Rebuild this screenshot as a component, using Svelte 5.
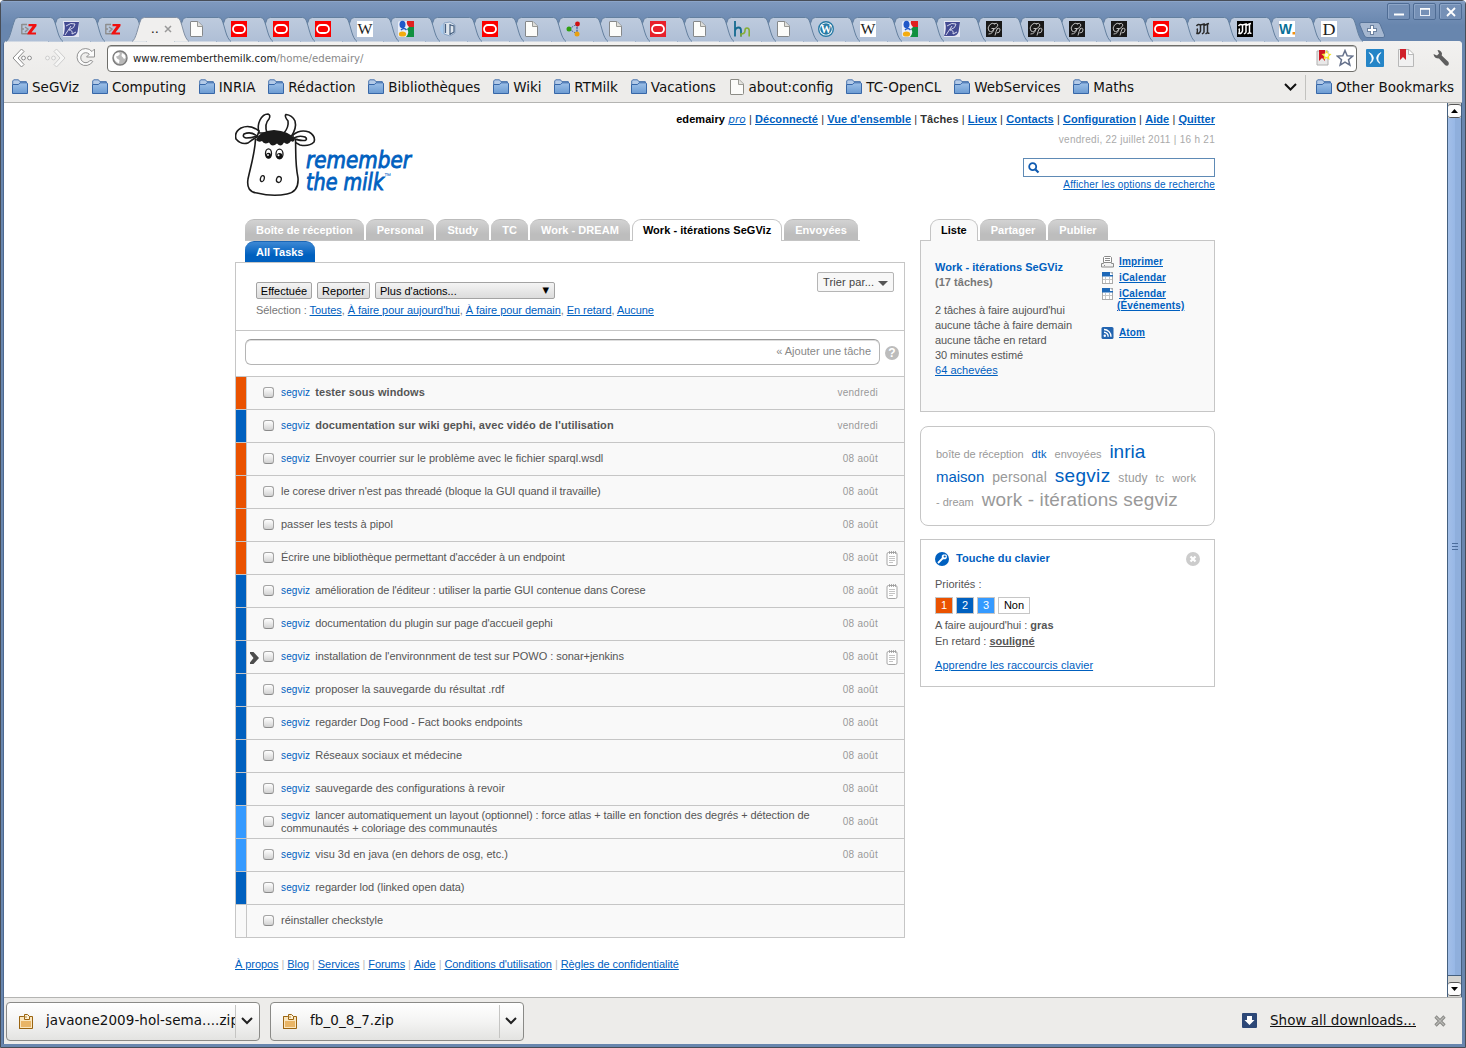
<script>
  const tabs = [
    'ez', 'inr', 'ez', 'active', 'page', 'ora', 'ora', 'ora', 'wiki', 'goo', 'cube', 'ora', 'page', 'graph', 'page', 'ora2',
    'page', 'hm', 'page', 'wp', 'wiki', 'goo', 'inr', 'gp', 'gp', 'gp', 'gp', 'ora', 'lemonde', 'mdark', 'wdot', 'dd'
  ];
  const bookmarks = ['SeGViz', 'Computing', 'INRIA', 'Rédaction', 'Bibliothèques', 'Wiki', 'RTMilk', 'Vacations', 'about:config', 'TC-OpenCL', 'WebServices', 'Maths'];
  const navLinks = ['Déconnecté', "Vue d'ensemble", 'Tâches', 'Lieux', 'Contacts', 'Configuration', 'Aide', 'Quitter'];
  const lists = ['Boîte de réception', 'Personal', 'Study', 'TC', 'Work - DREAM', 'Work - itérations SeGViz', 'Envoyées'];
  const tasks = [
    { p: 1, tag: true, name: 'tester sous windows', due: 'vendredi', bold: true },
    { p: 2, tag: true, name: "documentation sur wiki gephi, avec vidéo de l'utilisation", due: 'vendredi', bold: true },
    { p: 1, tag: true, name: 'Envoyer courrier sur le problème avec le fichier sparql.wsdl', due: '08 août' },
    { p: 1, name: "le corese driver n'est pas threadé (bloque la GUI quand il travaille)", due: '08 août', snug: true },
    { p: 1, name: 'passer les tests à pipol', due: '08 août' },
    { p: 1, name: "Écrire une bibliothèque permettant d'accéder à un endpoint", due: '08 août', note: true, tight: true },
    { p: 2, tag: true, name: "amélioration de l'éditeur : utiliser la partie GUI contenue dans Corese", due: '08 août', note: true, tight: true },
    { p: 2, tag: true, name: "documentation du plugin sur page d'accueil gephi", due: '08 août', tight: true },
    { p: 2, tag: true, name: "installation de l'environnment de test sur POWO : sonar+jenkins", due: '08 août', note: true, cursor: true, snug: true },
    { p: 2, tag: true, name: 'proposer la sauvegarde du résultat .rdf', due: '08 août' },
    { p: 2, tag: true, name: 'regarder Dog Food - Fact books endpoints', due: '08 août' },
    { p: 2, tag: true, name: 'Réseaux sociaux et médecine', due: '08 août' },
    { p: 2, tag: true, name: 'sauvegarde des configurations à revoir', due: '08 août' },
    { p: 3, tag: true, name: 'lancer automatiquement un layout (optionnel) : force atlas + taille en fonction des degrés + détection de communautés + coloriage des communautés', due: '08 août', tight: true, wrap: true },
    { p: 3, tag: true, name: 'visu 3d en java (en dehors de osg, etc.)', due: '08 août' },
    { p: 2, tag: true, name: 'regarder lod (linked open data)', due: '', snug: true },
    { p: 0, name: 'réinstaller checkstyle', due: '' }
  ];
  const footer = ['À propos', 'Blog', 'Services', 'Forums', 'Aide', "Conditions d'utilisation", 'Règles de confidentialité'];
</script>

{#snippet folder()}
  <svg class="ico" width="16" height="16" viewBox="0 0 16 16">
    <path d="M.7 13.500V2L1.700 .8H6.500L7.800 2.600H14.300V5" fill="#b4cbe8" stroke="#4a74ad" />
    <path d="M.5 14.500V6Q.5 5.500 1 5.500H6.500L8 3.800H15L15.500 4.300V14.500Z" fill="url(#fold)" stroke="#3767a8" />
  </svg>
{/snippet}

{#snippet sheet()}
  <svg class="ico" width="16" height="16" viewBox="0 0 16 16">
    <path d="M2 .5H10L14.500 5V14.500Q14.500 15.500 13.500 15.500H2Q1.500 15.500 1.500 15V1Q1.500 .5 2 .5Z" fill="#fbfbf9" stroke="#8c8c86" />
    <path d="M9.500 .5V5.500H14.500" fill="#e4e4e0" stroke="#9c9c96" />
  </svg>
{/snippet}

{#snippet zip()}
  <svg width="16" height="17" viewBox="0 0 16 17">
    <path d="M1.500 3.500H5.500V15.500H1.500ZM5.500 3.500H14.500V15.500H1.500V3.500" fill="#f8dca4" stroke="#9a6410" />
    <path d="M2 4H14V15H2Z" fill="#fae6be" /><path d="M3 8H13V14H3Z" fill="#e9b566" />
    <path d="M6.500 6.500V1.500H9.500L11.500 3.500V6.500Z" fill="#fdf0d4" stroke="#9a6410" /><path d="M6.500 4L9 4" stroke="#b98a3c" />
  </svg>
{/snippet}

{#snippet favicon(kind)}
  <svg class="fav" width="16" height="16" viewBox="0 0 16 16">
    {#if kind === 'ez'}
      <path d="M.8 3V13.200M.8 3.500H6M.8 8H3M.8 12.700H7M4 6L7 8L4 11" fill="none" stroke="#8d8d8d" stroke-width="1.400" /><path d="M7.500 3H15.500V5L10.500 11.500H15V13.500H6.500V12L11.500 5.200H7.500Z" fill="#f01010" />
    {:else if kind === 'inr'}
      <rect width="16" height="16" fill="#e4e6f2" /><path d="M1 1H16L14.500 11Q13 15 9 15H0Q3 8 1 1Z" fill="#434a92" />
      <path d="M2 14L8 5M3 5Q8 1 12 3Q12 7 6 9Q10 9 9 13L13 11" fill="none" stroke="#d5d7ec" />
    {:else if kind === 'page'}
      <path d="M2 .5H9L13.500 5V14.500Q13.500 15.500 12.500 15.500H2Q1.500 15.500 1.500 15V1Q1.500 .5 2 .5Z" fill="#fcfcfa" stroke="#85888a" /><path d="M8.500 .5V5.500H13.500" fill="#dededa" stroke="#9a9a96" />
    {:else if kind === 'ora' || kind === 'ora2'}
      <rect width="16" height="16" fill={kind === 'ora' ? '#fb0000' : '#e8202a'} /><rect x="2" y="4" width="12" height="8" rx="4" fill="none" stroke="#fff" stroke-width="1.800" />
    {:else if kind === 'wiki'}
      <rect width="16" height="16" fill="#fff" /><text x=".5" y="13" class="serif" font-size="15" fill="#222" textLength="15" lengthAdjust="spacingAndGlyphs">W</text>
    {:else if kind === 'goo'}
      <rect width="16" height="16" rx="2" fill="#e9eef8" /><path d="M9 0H16V6H11Q8 3 9 0Z" fill="#e02020" /><path d="M11 6H16V16H8Q12 11 9 8Z" fill="#109040" />
      <ellipse cx="4.500" cy="3.500" rx="3" ry="3.800" fill="#2058c8" /><path d="M3 9Q6 6 8.500 9" stroke="#2058c8" stroke-width="1.500" fill="none" /><ellipse cx="4.500" cy="13" rx="3.700" ry="2.600" fill="#f4ac10" />
    {:else if kind === 'cube'}
      <circle cx="6" cy="8" r="6" fill="#a9c9ea" /><path d="M4 2L10 1L15 4V12L10 15L4 13Z" fill="#dfe6ee" stroke="#8ba4c4" /><path d="M10 3V14M5.500 3V12M10.500 4L14 5V11L10.500 13" stroke="#455f80" stroke-width="1.200" fill="none" />
    {:else if kind === 'graph'}
      <path d="M3 8L11 3L11 13ZM11 3V13" fill="none" stroke="#4c68a0" stroke-dasharray="2 1" /><circle cx="3" cy="8" r="2.500" fill="#30a010" /><circle cx="11.500" cy="3" r="2.400" fill="#d01010" /><circle cx="11" cy="13" r="2.500" fill="#e8a010" />
    {:else if kind === 'hm'}
      <path d="M1 0V15.500M1 9.500Q2 6.500 4.500 6.500T7 9.500V15.500" fill="none" stroke="#146a90" stroke-width="1.800" /><path d="M7 15.500V13Q11 13 11 9.500Q11 7 13 7T15.200 9.500V15.500" fill="none" stroke="#86ae36" stroke-width="1.600" />
    {:else if kind === 'wp'}
      <circle cx="8" cy="8" r="7.300" fill="#fff" stroke="#267aa5" stroke-width="1.400" /><circle cx="8" cy="8" r="5.800" fill="#267aa5" /><text x="2.500" y="12.300" class="serif" font-size="12" font-weight="bold" fill="#fff" textLength="11" lengthAdjust="spacingAndGlyphs">W</text>
    {:else if kind === 'gp'}
      <rect width="16" height="16" fill="#181818" /><path d="M9 3Q6 1 3.500 4T3 10Q6 12 8 7.500H5.500M8 7.500Q7 13 2.500 13M9 14.500Q10 10 11.500 7M11 8Q14 6 14 9T10.500 12M8 3Q11 1 12 4Q11 7 8 8" fill="none" stroke="#bdbdbd" />
    {:else if kind === 'lemonde' || kind === 'mdark'}
      {#if kind === 'mdark'}<rect width="16" height="16" fill="#000" />{/if}
      <path d="M1.500 5Q3 2.500 5.500 4V10Q4.500 13 2 12.500Q3 9 2 7.500M5.500 4L9 3V11.500M9 4.500L12.500 3V11Q13 13 14.500 12M7 13L9 11.500M10.500 13L12.500 11.500M12.500 3L14 2.500" fill="none" stroke={kind === 'mdark' ? '#fff' : '#282828'} stroke-width="1.500" />
    {:else if kind === 'wdot'}
      <rect width="16" height="16" fill="#fff" /><text x="0" y="13" class="sans" font-size="14" font-weight="bold" fill="#087098" textLength="13" lengthAdjust="spacingAndGlyphs">W</text><rect x="13.500" y="11" width="2.500" height="2.500" fill="#f09010" />
    {:else if kind === 'dd'}
      <rect width="16" height="16" fill="#fff" /><text x="1.500" y="13.500" class="serif" font-size="16" fill="#222" textLength="13" lengthAdjust="spacingAndGlyphs">D</text>
    {/if}
  </svg>
{/snippet}

<svg class="defs" width="0" height="0">
  <defs>
    <linearGradient id="fold" x1="0" y1="0" x2="0" y2="1"><stop offset="0" stop-color="#9dc0e8" /><stop offset="1" stop-color="#6c9bd2" /></linearGradient>
    <linearGradient id="tabg" x1="0" y1="0" x2="0" y2="1"><stop offset="0" stop-color="#becbde" /><stop offset="1" stop-color="#afbfd6" /></linearGradient>
  </defs>
</svg>

<div class="window">
  <header class="title">
    <div class="tabs">
      {#each tabs as kind, i}
        <div class="tab" style:z-index={kind === 'active' ? 60 : 40 - i}>
          <svg class="shape" width="60" height="25" viewBox="0 0 60 25">
            <path d="M0 24.500C4 23 6 9 9 2.500Q10.200 .5 12.500 .5H44.500Q47 .5 48 3C51 10 52 21 57 24.500Z" fill={kind === 'active' ? '#f0efee' : 'url(#tabg)'} />
            <path d="M0 24.500C4 23 6 9 9 2.500Q10.200 .5 12.500 .5H44.500Q47 .5 48 3C51 10 52 21 57 24.500" fill="none" stroke={kind === 'active' ? '#8290a4' : '#64809f'} />
          </svg>
          {#if kind === 'active'}
            <span class="dots">..</span>
            <svg class="x" width="8" height="8" viewBox="0 0 8 8"><path d="M1 1L7 7M7 1L1 7" stroke="#999" stroke-width="1.500" /></svg>
          {:else}
            {@render favicon(kind)}
          {/if}
        </div>
      {/each}
      <svg class="plus" width="27" height="17" viewBox="0 0 27 17"><path d="M2 .5H18Q20 .5 21 2L25.500 13Q26 15.500 24 15.500H8Q6 15.500 5 13L.8 3Q.3 .5 2 .5Z" fill="#a5b7d0" stroke="#57749a" /><path d="M13 3V13M8 8H18" stroke="#6c82a0" stroke-width="4" /><path d="M13 4V12M9 8H17" stroke="#fff" stroke-width="2" /></svg>
    </div>
    <div class="winbtns">
      <span><svg width="22" height="16" viewBox="0 0 22 16"><path d="M6 10.500H16" stroke="#fff" stroke-width="2" /></svg></span>
      <span><svg width="22" height="16" viewBox="0 0 22 16"><rect x="6.500" y="4.500" width="9" height="7" fill="none" stroke="#e8eef6" /><path d="M6 5H16" stroke="#fff" stroke-width="1.500" /></svg></span>
      <span><svg width="22" height="16" viewBox="0 0 22 16"><path d="M7 4L15 12M15 4L7 12" stroke="#fff" stroke-width="1.800" /></svg></span>
    </div>
  </header>

  <div class="frame">
    <div class="toolbar">
      <svg width="24" height="22" viewBox="0 0 24 22"><path d="M10.500 2L2 11L10.500 20L13 17.500L7 11L13 4.500Z" fill="#fff" stroke="#8c8c8c" /><circle cx="12.500" cy="11" r="1.900" fill="#fff" stroke="#8c8c8c" /><circle cx="18.500" cy="11" r="1.900" fill="#fff" stroke="#8c8c8c" /></svg>
      <svg class="fwd" width="24" height="22" viewBox="0 0 24 22"><path d="M13.500 2L22 11L13.500 20L11 17.500L17 11L11 4.500Z" fill="#f6f6f5" stroke="#cdcdcd" /><circle cx="10.500" cy="11" r="1.900" fill="#f6f6f5" stroke="#cdcdcd" /><circle cx="4.500" cy="11" r="1.900" fill="#f6f6f5" stroke="#cdcdcd" /></svg>
      <svg class="reload" width="22" height="22" viewBox="0 0 22 22"><path d="M17.800 14.500A8.500 8.500 0 1 1 17 4.500L19.500 2V10H11.500L14.300 7.200A5 5 0 1 0 14.500 14Q16 12.500 17.800 14.500Z" fill="#fbfbfb" stroke="#929292" /></svg>
      <div class="url">
        <svg width="16" height="16" viewBox="0 0 16 16"><circle cx="8" cy="8" r="7" fill="#b9b9b9" stroke="#7c7c7c" stroke-width="1.400" /><path d="M3 4Q5 2 7 2.500L8 4L6 6L4 6.500L5 8.500L7.500 10L7 13.500Q2 11 2 7ZM10 3L13 5L13.500 8L12 9L11 7.500L9.500 6Z" fill="#fff" /></svg>
        <span class="addr">www.rememberthemilk.com<i>/home/edemairy/</i></span>
        <svg class="bmstar" width="16" height="16" viewBox="0 0 16 16"><path d="M1 1H12V15H1Z" fill="#e8e8e8" stroke="#b0b0b0" /><path d="M3 0H9V11L6 8L3 11Z" fill="#cf1722" /><path d="M10.500 0L12 3.500L15.500 4L13 6.500L13.500 10L10.500 8L7.500 10L8 6.500L5.500 4L9 3.500Z" fill="#f3e52c" /><circle cx="10.500" cy="5" r="2" fill="#fffbe0" /></svg>
        <svg width="18" height="18" viewBox="0 0 18 18"><path d="M9 1.500L11.200 6.700L16.700 7.100L12.500 10.700L13.900 16.200L9 13.200L4.100 16.200L5.500 10.700L1.300 7.100L6.800 6.700Z" fill="#fff" stroke="#66728c" stroke-width="1.500" /></svg>
      </div>
      <svg class="bfly" width="18" height="18" viewBox="0 0 18 18"><rect width="18" height="18" rx="1" fill="#2585c7" /><path d="M3 3.500Q7 5 7.500 9Q7 13 4 14.500Q6.500 11 6 9Q5.500 6 3 3.500ZM15 3.500Q11 5 10.500 9Q11 13 14 14.500Q11.500 11 12 9Q12.500 6 15 3.500Z" fill="#fff" stroke="#fff" stroke-width=".6" /></svg>
      <svg class="redbm" width="16" height="18" viewBox="0 0 16 18"><path d="M.5 .5H11L15.500 5V17.500H.5Z" fill="#f1f1f1" stroke="#b8b8b8" /><path d="M10.500 1V5.500H15" fill="#fff" stroke="#bbb" /><path d="M2 0H8V11L5 8L2 11Z" fill="#d0202a" /></svg>
      <svg class="wrench" width="18" height="18" viewBox="0 0 18 18"><path d="M1.500 5L5 6.500L7 4.500L5.500 1Q9 1 10 4.500L9.700 6.500L16.500 13Q17.500 15 16 16.500Q14 17 13 16L7 9.500Q2 9.500 1.500 5Z" fill="#5e5e5e" /></svg>
    </div>
    <nav class="bookmarks">
      {#each bookmarks as b}
        <span class="bm">{#if b === 'about:config'}{@render sheet()}{:else}{@render folder()}{/if}{b}</span>
      {/each}
      <svg class="chev" width="13" height="8" viewBox="0 0 13 8"><path d="M1 1L6.500 6.500L12 1" fill="none" stroke="#111" stroke-width="2" /></svg>
      <span class="bm other">{@render folder()}Other Bookmarks</span>
    </nav>

    <div class="viewport">
      <div class="page">
        <div class="head">
          <svg class="logo" width="180" height="86" viewBox="0 0 180 86">
            <g fill="#fff" stroke="#1b1b1b" stroke-width="1.600">
              <path d="M24 20Q22 13 25 7Q28 1 33 1Q36 2 34 6Q29 11 32 20ZM49 20Q54 14 53 8Q49 3 51 1.500Q57 2 60 8Q62 15 56 24Z" />
              <path d="M24 18Q15 11 6 15Q-1 19 1 26Q6 32 13 30Q18 26 22 24ZM58 22Q65 16 74 19Q81 23 79 29Q74 34 65 32Q60 30 58 27Z" />
              <path d="M22 23Q16 18 9 21Q7 24 11 25Q17 25 22 23ZM59 25Q64 22 70 24Q73 26 70 27.500Q63 28 59 25Z" />
              <path d="M20.500 26C20 40 15 56 13 66Q11 79 22 80Q38 84 52 81Q64 79 63 65C60 50 61 40 60.500 26" />
            </g>
            <path d="M21 27Q24 18 39 17Q54 18 60 26Q59 30 56 28Q53 33 49 29.500Q46 35 42 30.500Q37 35 34 29.500Q29 32 27 28Q24 30 21 27Z" fill="#1b1b1b" />
            <g fill="#fff" stroke="#1b1b1b" stroke-width="1.300"><ellipse cx="33.500" cy="40.500" rx="3" ry="4.700" /><ellipse cx="44.500" cy="41" rx="3.500" ry="4.900" /><ellipse cx="27.500" cy="65.500" rx="1.900" ry="3" transform="rotate(15 27 65)" /><ellipse cx="44" cy="66.500" rx="2.400" ry="3" transform="rotate(15 44 66)" /></g>
            <ellipse cx="33.500" cy="42.500" rx="2.500" ry="2.800" fill="#111" /><ellipse cx="44.500" cy="43" rx="2.900" ry="3" fill="#111" /><circle cx="33" cy="42" r=".9" fill="#fff" /><circle cx="43.500" cy="42.300" r="1" fill="#fff" />
            <text class="brand" x="71" y="54.500" textLength="105" lengthAdjust="spacingAndGlyphs">remember</text>
            <text class="brand" x="71" y="76.500" textLength="78" lengthAdjust="spacingAndGlyphs">the milk</text>
            <text class="tm" x="149" y="65">™</text>
          </svg>
          <div class="account">
            <div class="links"><b class="user">edemairy</b> <a class="pro" href="#pro">pro</a>{#each navLinks as l}{' | '}{#if l === 'Tâches'}<b>{l}</b>{:else}<a href="#nav">{l}</a>{/if}{/each}</div>
            <div class="date">vendredi, 22 juillet 2011 | 16 h 21</div>
            <div class="search"><svg width="12" height="12" viewBox="0 0 12 12"><circle cx="4.700" cy="4.700" r="3.500" fill="none" stroke="#0f5ab0" stroke-width="1.800" /><path d="M7.500 7.500L10.500 10.500" stroke="#0f5ab0" stroke-width="2.200" /></svg></div>
            <a class="opts" href="#opts">Afficher les options de recherche</a>
          </div>
        </div>

        <div class="cols">
          <main>
            <div class="ltabs first">{#each lists as l}<span class:on={l.includes('SeGViz')}>{l}</span>{/each}</div>
            <div class="ltabs second"><span class="blue">All Tasks</span></div>
            <section class="box">
              <div class="actions">
                <div class="left">
                  <div class="btns"><button class="b1">Effectuée</button><button class="b2">Reporter</button><button class="sel">Plus d'actions...<i>▼</i></button></div>
                  <div class="selection">Sélection : <a href="#s">Toutes</a>, <a href="#s">À faire pour aujourd'hui</a>, <a href="#s">À faire pour demain</a>, <a href="#s">En retard</a>, <a href="#s">Aucune</a></div>
                </div>
                <button class="sort">Trier par...<svg width="10" height="5" viewBox="0 0 10 5"><path d="M0 0H10L5 5Z" fill="#555" /></svg></button>
              </div>
              <div class="add">
                <div class="field">« Ajouter une tâche</div>
                <span class="help">?</span>
              </div>
              {#each tasks as t}
                <div class="task">
                  <span class="prio p{t.p}"></span>
                  <span class="cur">{#if t.cursor}<svg width="9" height="12" viewBox="0 0 9 12"><path d="M0 0H3.500L9 6L3.500 12H0V10.500L3.500 6L0 1.500Z" fill="#4c4c4c" /></svg>{/if}</span>
                  <span class="check"></span>
                  <span class="name" class:bold={t.bold} class:tight={t.tight} class:snug={t.snug} class:wrap={t.wrap}>{#if t.tag}<span class="tag">segviz</span>{/if}{t.name}</span>
                  <span class="due">{t.due}</span>
                  <span class="note">{#if t.note}<svg width="12" height="15" viewBox="0 0 12 15"><rect x="1" y="1.500" width="10" height="13" rx="1.500" fill="#fff" stroke="#a5a5a5" /><path d="M3.500 0V3M5.500 0V3M7.500 0V3M9.500 0V3" stroke="#999" stroke-width=".8" /><path d="M3 5.500H9M3 7.500H9M3 9.500H9M3 11.500H7" stroke="#c4c4c4" /></svg>{/if}</span>
                </div>
              {/each}
            </section>
            <footer>{#each footer as f, i}{#if i}<i>|</i>{/if}<a href="#f">{f}</a>{/each}</footer>
          </main>

          <aside>
            <div class="ltabs"><span class="on grey">Liste</span><span>Partager</span><span>Publier</span></div>
            <section class="info">
              <div class="stats">
                <b class="lname">Work - itérations SeGViz</b>
                <b class="cnt">(17 tâches)</b>
                <p>2 tâches à faire aujourd'hui</p><p>aucune tâche à faire demain</p><p>aucune tâche en retard</p><p>30 minutes estimé</p>
                <p><a href="#done">64 achevées</a></p>
              </div>
              <div class="export">
                <div><svg width="13" height="12" viewBox="0 0 13 12"><path d="M2.500 6V1.500L3.500 .5H9.500L10.500 1.500V6M4 2.500H9M4 4.500H9" fill="#fff" stroke="#8a8a8a" /><path d="M.5 11V7.500H2.500V6.500H10.500V7.500H12.500V11Z" fill="#f2f2f2" stroke="#8a8a8a" /><path d="M3 9.500H4" stroke="#8a8a8a" /></svg><a href="#p">Imprimer</a></div>
                {#each ['iCalendar', 'iCalendar'] as c}
                  <div><svg width="11" height="12" viewBox="0 0 11 12"><rect x=".5" y=".5" width="10" height="11" fill="#fff" stroke="#aaa" /><path d="M0 0H8L11 3V4.500H0Z" fill="#1d68b8" /><path d="M8 0V3H11" fill="#fff" /><path d="M3.500 5V11M7.500 5V11M1 7.500H10" stroke="#c6c6c6" /></svg><a href="#c">{c}</a></div>
                {/each}
                <a class="ev" href="#e">(Événements)</a>
                <div><svg width="12" height="12" viewBox="0 0 12 12"><rect width="12" height="12" rx="1.500" fill="#2264b0" /><circle cx="3.300" cy="8.800" r="1.200" fill="#fff" /><path d="M2.500 5.300A4.200 4.200 0 0 1 6.700 9.700M2.500 2.500A7 7 0 0 1 9.500 9.700" fill="none" stroke="#fff" stroke-width="1.400" /></svg><a href="#a">Atom</a></div>
              </div>
            </section>
            <section class="cloud">
              <div><span class="s0">boîte de réception</span><span class="bl">dtk</span><span class="s0">envoyées</span><span class="bl xl s0">inria</span></div>
              <div><span class="bl md s0">maison</span><span class="m2">personal</span><span class="bl xl wide">segviz</span><span class="s2">study</span><span>tc</span><span>work</span></div>
              <div><span class="s0">- dream</span><span class="xl">work - itérations segviz</span></div>
            </section>
            <section class="keys">
              <div class="khead">
                <svg width="14" height="14" viewBox="0 0 14 14"><circle cx="7" cy="7" r="7" fill="#0060bf" /><path d="M3 11L8 6" stroke="#fff" stroke-width="1.800" /><path d="M8 2.500H11L11.800 3.300V6L10.500 7.200H8L6.800 6V3.800Z" fill="#fff" /><circle cx="9.700" cy="4.500" r="1.100" fill="#0060bf" /></svg>
                <b>Touche du clavier</b>
                <svg class="close" width="14" height="14" viewBox="0 0 14 14"><circle cx="7" cy="7" r="7" fill="#ccc" /><path d="M4.500 4.500L9.500 9.500M9.500 4.500L4.500 9.500" stroke="#fff" stroke-width="2.200" /></svg>
              </div>
              <p class="pr">Priorités :</p>
              <div class="levels"><span class="p1">1</span><span class="p2">2</span><span class="p3">3</span><span class="none">Non</span></div>
              <p class="k1">A faire aujourd'hui : <b>gras</b></p>
              <p class="k2">En retard : <b><u>souligné</u></b></p>
              <p class="k3"><a href="#k">Apprendre les raccourcis clavier</a></p>
            </section>
          </aside>
        </div>
      </div>
      <div class="scroll">
        <span class="sb up"><svg width="7" height="4" viewBox="0 0 7 4"><path d="M0 4L3.500 0L7 4Z" /></svg></span>
        <span class="thumb"><i></i><i></i><i></i></span>
        <span class="sb"><svg width="7" height="4" viewBox="0 0 7 4"><path d="M0 0L3.500 4L7 0Z" /></svg></span>
      </div>
    </div>

    <div class="shelf">
      {#each ['javaone2009-hol-sema....zip', 'fb_0_8_7.zip'] as file}
        <div class="dl">{@render zip()}<span>{file}</span><em><svg width="12" height="8" viewBox="0 0 12 8"><path d="M1 1L6 6L11 1" fill="none" stroke="#222" stroke-width="2" /></svg></em></div>
      {/each}
      <svg class="arrow" width="15" height="15" viewBox="0 0 15 15"><rect width="15" height="15" rx="1" fill="#2d4878" /><path d="M5 3H10V7H12.500L7.500 12L2.500 7H5Z" fill="#fff" /></svg>
      <a class="all" href="#dl">Show all downloads...</a>
      <svg class="xx" width="12" height="12" viewBox="0 0 12 12"><path d="M1.500 1.500L10.500 10.500M10.500 1.500L1.500 10.500" stroke="#868683" stroke-width="3.200" /><path d="M2 2L10 10M10 2L2 10" stroke="#b8b8b5" stroke-width="1.300" /></svg>
    </div>
  </div>
</div>

<style>
  :global(body) { margin: 0; overflow: hidden; }
  * { box-sizing: border-box; }
  svg { flex: none; display: block; }
  p { margin: 0; }
  i, em { font-style: normal; }
  a { color: #0060bf; }
  .defs { position: absolute; }
  .serif { font-family: "Liberation Serif", serif; }
  .sans { font-family: "Liberation Sans", sans-serif; }
  .window { width: 1466px; height: 1048px; display: flex; flex-direction: column; background: #6886ae; border: 1px solid #474d57; border-radius: 4px 4px 0 0; font-family: "Liberation Sans", Arial, sans-serif; }
  .title { height: 40px; flex: none; display: flex; justify-content: space-between; background: linear-gradient(#7f99be, #6886ae 60%); border-top: 1px solid #8ba4c8; }
  .tabs { display: flex; padding: 15px 0 0 5px; }
  .tab { width: 41.940px; height: 24px; position: relative; display: flex; align-items: flex-start; }
  .shape { position: absolute; left: 0; top: 0; }
  .fav { position: relative; margin: 4px 0 0 15px; overflow: visible; }
  .dots { position: relative; margin: 4px 0 0 19px; font: 13px/16px "DejaVu Sans", sans-serif; letter-spacing: -.3px; color: #222; }
  .x { position: relative; margin: 8px 0 0 6px; }
  .plus { margin: 5px 0 0 11px; }
  .winbtns { display: flex; gap: 3px; padding: 1px 3px 0 0; }
  .winbtns span { width: 23px; height: 17px; border: 1px solid #4f6c94; border-radius: 2px; background: #7590b6; box-shadow: inset 1px 1px #8da5c7; }
  .frame { flex: 1; margin: 0 3px 3px 2px; border-left: 1px solid #4c6891; display: flex; flex-direction: column; background: #edecea; min-height: 0; border-radius: 4px 4px 0 0; }
  .toolbar { height: 34px; flex: none; display: flex; align-items: center; padding: 0 0 0 7px; background: linear-gradient(#f2f1f0, #edecea); border-radius: 4px 4px 0 0; }
  .fwd { margin-left: 8px; }
  .reload { margin-left: 8px; }
  .url { width: 1250px; height: 27px; flex: none; margin-left: 10px; border: 1px solid #6e6e6a; border-radius: 4px; background: #fff; box-shadow: inset 0 1px #bbb; display: flex; align-items: center; padding: 0 2px 0 4px; }
  .addr { flex: 1; margin-left: 5px; font: 11.300px "DejaVu Sans Condensed", "DejaVu Sans", sans-serif; color: #1a1a1a; }
  .addr i { color: #888; }
  .bmstar { margin-right: 4px; }
  .bfly { margin-left: 9px; }
  .redbm { margin-left: 14px; }
  .wrench { margin-left: 18px; }
  .bookmarks { height: 28px; flex: none; display: flex; align-items: center; gap: 12.800px; padding: 0 8px 3px 8px; border-bottom: 1px solid #b4b4b2; font: 13.500px/17px "DejaVu Sans", sans-serif; color: #111; }
  .bm { display: flex; gap: 4px; white-space: nowrap; height: 17px; }
  .chev { margin-left: auto; margin-right: -5px; }
  .other { border-left: 1px solid #c2c2bf; padding: 4px 0 4px 10px; height: 25px; }
  .viewport { flex: 1; min-height: 0; background: #fff; display: flex; justify-content: space-between; }
  .page { width: 980px; margin-left: 231px; font-size: 11px; color: #555; flex: none; }
  .head { height: 116px; display: flex; justify-content: space-between; }
  .logo { margin-top: 10px; }
  .brand { font-family: "DejaVu Sans", sans-serif; font-style: italic; font-size: 22.500px; fill: #0060bf; stroke: #0060bf; stroke-width: .9; }
  .tm { font: 7px "Liberation Sans", sans-serif; fill: #0060bf; }
  .account { display: flex; flex-direction: column; align-items: flex-end; padding-top: 10px; }
  .links { font-weight: normal; line-height: 13px; color: #333; white-space: nowrap; letter-spacing: .070px; }
  .links a { font-weight: bold; }
  .links .user { color: #000; }
  .links .pro { font-family: "DejaVu Sans", sans-serif; font-style: italic; font-size: 10.500px; line-height: 12px; font-weight: normal; }
  .date { font-size: 10px; line-height: 12px; margin-top: 8px; color: #aaa; letter-spacing: .280px; }
  .search { width: 192px; height: 19px; border: 1px solid #5e8ab5; margin-top: 12px; padding: 3px 0 0 4px; }
  .opts { font-size: 10px; line-height: 12px; margin-top: 2px; letter-spacing: .190px; }
  .cols { display: flex; gap: 15px; }
  main { width: 670px; }
  aside { width: 295px; }
  .ltabs { display: flex; gap: 2px; height: 22px; padding-left: 10px; }
  .ltabs span { height: 21px; padding: 0 11px; border-radius: 9px 9px 0 0; background: linear-gradient(#d2d2d2, #bdbdbd 70%); border-top: 1px solid #bbb; color: #fff; font-weight: bold; line-height: 21px; white-space: nowrap; }
  .ltabs .on { height: 22px; background: #fff; border: 1px solid #c4c4c4; border-bottom: 0; color: #000; padding: 0 10px; }
  .ltabs .grey { background: #f9f9f9; position: relative; }
  .ltabs .blue { height: 21px; background: linear-gradient(#3d88d4, #0060bf 65%); border-color: #1b66b5; }
  .first { width: fit-content; margin-left: 10px; padding: 0 2px 0 0; border-bottom: 1px solid #c4c4c4; letter-spacing: .040px; }
  .second { height: 21px; }
  .box { border: 1px solid #c6c6c6; }
  .actions { height: 68px; border-bottom: 1px solid #c6c6c6; display: flex; justify-content: space-between; padding: 9px 10px 0 20px; }
  button { font: 11px "Liberation Sans", sans-serif; padding: 0; height: 17px; border: 1px solid #a3a3a3; border-radius: 2px; background: linear-gradient(#f4f4f4, #dcdcdc); color: #000; white-space: nowrap; }
  .left { padding-top: 10px; }
  .btns { display: flex; gap: 5px; }
  .b1 { width: 56px; }
  .b2 { width: 53px; }
  .sel { width: 180px; display: flex; justify-content: space-between; align-items: center; padding: 0 5px 0 4px; }
  .sel i { font: 8.500px/10px "DejaVu Sans", sans-serif; margin-top: -2px; }
  .selection { margin-top: 5px; line-height: 13px; color: #777; white-space: nowrap; letter-spacing: -.055px; }
  .sort { width: 77px; height: 20px; display: flex; align-items: center; justify-content: space-between; padding: 0 5px 1px; border-color: #b5b5b5; background: #f7f7f7; color: #444; letter-spacing: .120px; }
  .sort svg { margin-top: 4px; }
  .add { height: 45px; display: flex; padding: 8px 5px 0 9px; justify-content: space-between; }
  .field { width: 635px; height: 26px; border: 1px solid #b5b5b5; border-top-color: #999; border-radius: 6px; box-shadow: inset 0 1px #ddd; text-align: right; padding-right: 8px; line-height: 23px; color: #888; }
  .help { width: 14px; height: 14px; margin-top: 7px; border-radius: 50%; background: #bcbcbc; color: #fff; text-align: center; font-weight: bold; font-size: 12px; line-height: 14px; }
  .task { height: 33px; border-top: 1px solid #c6c6c6; background: #f9f9f9; display: flex; align-items: center; }
  .prio { width: 11px; height: 32px; border-right: 1px solid #c6c6c6; }
  .p1 { background: #ea5200; }
  .p2 { background: #0060bf; }
  .p3 { background: #359aff; }
  .cur { width: 16px; padding: 1px 0 0 3px; }
  .check { width: 11px; height: 11px; margin-bottom: 1px; border: 1px solid #a4a4a4; border-bottom-color: #8a8a8a; border-radius: 3px; background: linear-gradient(#fff, #d2d2d2); }
  .name { width: 546px; margin-left: 7px; padding-bottom: 2px; line-height: 13px; }
  .bold { font-weight: bold; letter-spacing: .075px; }
  .tight { letter-spacing: -.080px; }
  .snug { letter-spacing: -.040px; }
  .wrap { padding: 0; }
  .tag { color: #0060bf; font-size: 10px; font-weight: normal; margin-right: 5px; letter-spacing: .150px; }
  .due { width: 51px; padding-bottom: 2px; text-align: right; color: #999; font-size: 10px; letter-spacing: .280px; }
  .note { margin-left: 8px; }
  footer { margin-top: 20px; line-height: 13px; white-space: nowrap; letter-spacing: -.070px; }
  footer i { color: #bbb; margin: 0 3px; }
  .info { height: 172px; margin-top: -1px; border: 1px solid #c6c6c6; background: #f9f9f9; display: flex; padding: 14px; }
  .stats { width: 166px; line-height: 15px; padding-top: 5px; white-space: nowrap; }
  .stats p { letter-spacing: -.070px; }
  .stats p:last-child { letter-spacing: .040px; }
  .stats b { display: block; letter-spacing: .030px; }
  .lname { color: #0060bf; }
  .cnt { color: #777; margin-bottom: 13px; }
  .export { font-size: 10px; font-weight: bold; letter-spacing: .150px; }
  .export div { display: flex; height: 16px; line-height: 13px; }
  .export div svg { width: 13px; margin-top: 1px; }
  .export div a { margin-left: 5px; }
  .export .ev { display: block; margin: -3px 0 14px 16px; line-height: 12px; }
  .cloud { height: 100px; margin-top: 14px; border: 1px solid #c6c6c6; border-radius: 8px; padding: 13px 0 0 15px; color: #999; letter-spacing: .130px; }
  .cloud div { display: flex; gap: 7.900px; align-items: baseline; height: 24px; line-height: 24px; white-space: nowrap; }
  .cloud .s0 { letter-spacing: -.020px; }
  .cloud .bl { color: #0060bf; }
  .cloud .xl { font-size: 19px; }
  .cloud .wide { letter-spacing: .300px; }
  .cloud .md { font-size: 15px; }
  .cloud .m2 { font-size: 14px; }
  .cloud .s2 { font-size: 12px; }
  .keys { height: 148px; margin-top: 13px; border: 1px solid #c6c6c6; padding: 12px 14px; line-height: 13px; }
  .khead { display: flex; align-items: center; height: 14px; color: #0060bf; }
  .khead b { margin-left: 7px; flex: 1; padding-bottom: 2px; letter-spacing: .070px; }
  .pr { margin-top: 12px; }
  .levels { display: flex; gap: 3px; margin-top: 6px; }
  .levels span { width: 18px; height: 17px; border: 1px solid #c6c6c6; color: #fff; text-align: center; line-height: 15px; }
  .levels .none { width: 32px; color: #000; }
  .k1 { margin-top: 5px; letter-spacing: -.080px; }
  .k1 b { letter-spacing: .050px; }
  .k2 { margin-top: 3px; }
  .k3 { margin-top: 11px; letter-spacing: .050px; }
  .scroll { width: 15px; padding-top: 1px; display: flex; flex-direction: column; background: #d5d5d2; border-right: 1px solid #45607f; border-left: 1px solid #45607f; }
  .sb { height: 14px; background: #fcfcfc; display: flex; align-items: center; justify-content: center; border-top: 1px solid #555; border-bottom: 1px solid #555; border-radius: 3px; }
  .thumb { height: 858px; margin-bottom: 6px; flex: none; border-bottom: 1px solid #45607f; background: linear-gradient(90deg, #a3bfe8, #98b8e6 50%, #8fafdc 51%); display: flex; flex-direction: column; align-items: center; justify-content: center; gap: 2px; }
  .thumb i { width: 6px; height: 1px; background: #4b6d9c; }
  .shelf { height: 47px; flex: none; border-top: 1px solid #b4b4b2; display: flex; align-items: center; padding: 0 16px 0 2px; font: 13.500px "DejaVu Sans", sans-serif; color: #111; }
  .dl { width: 254px; height: 39px; margin-right: 10px; border: 1px solid #8a8a87; border-radius: 4px; background: linear-gradient(#fff, #f4f4f3 50%, #e3e3e1); display: flex; align-items: center; padding-left: 11px; }
  .dl span { flex: 1; margin-left: 12px; overflow: hidden; white-space: nowrap; padding-bottom: 2px; letter-spacing: .060px; }
  .dl em { width: 24px; height: 33px; padding-right: 1px; border-left: 1px solid #c5c5c3; display: flex; align-items: center; justify-content: center; }
  .arrow { margin-left: auto; margin-right: 13px; margin-bottom: 1px; }
  .all { color: #111; white-space: nowrap; padding-bottom: 2px; }
  .xx { margin-left: 18px; margin-bottom: 1px; }
</style>
